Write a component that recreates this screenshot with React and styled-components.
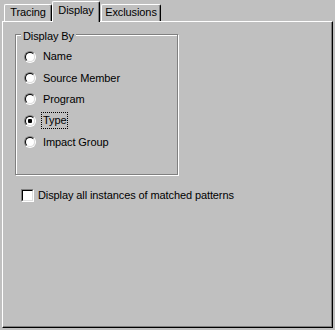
import React from "react";
import styled, { createGlobalStyle } from "styled-components";

const Global = createGlobalStyle`
  html, body { margin: 0; padding: 0; background: #c0c0c0; }
  body { font-family: "Liberation Sans", Arial, sans-serif; font-size: 11px; letter-spacing: -0.1px; color: #000; }
`;

const Window = styled.div`
  width: 335px;
  height: 330px;
  box-sizing: border-box;
  padding: 1px 0 0 2px;
  background: #c0c0c0;
`;

const TabRow = styled.div`
  display: flex;
  align-items: flex-end;
  height: 20px;
`;

const Tab = styled.div`
  position: relative;
  box-sizing: border-box;
  width: ${(p) => p.$w}px;
  height: ${(p) => (p.$active ? 21 : 17)}px;
  margin-left: ${(p) => p.$ml || 0}px;
  margin-bottom: ${(p) => (p.$active ? -1 : 0)}px;
  padding-top: ${(p) => (p.$active ? 2 : 1)}px;
  z-index: ${(p) => (p.$active ? 2 : 0)};
  background: #c0c0c0;
  border-top: 1px solid #fff;
  border-left: 1px solid #fff;
  border-right: 1px solid #000;
  border-top-left-radius: 2px;
  border-top-right-radius: 2px;
  box-shadow: inset -1px 0 0 #808080;
  text-align: center;
  line-height: 13px;
  white-space: nowrap;
`;

const Panel = styled.div`
  position: relative;
  z-index: 1;
  box-sizing: border-box;
  width: 331px;
  height: 307px;
  padding: 12px 0 0 12px;
  border-style: solid;
  border-width: 1px;
  border-color: #fff #000 #000 #fff;
  box-shadow: inset -1px -1px 0 #808080;
`;

const GroupBox = styled.div`
  position: relative;
  box-sizing: border-box;
  width: 163px;
  height: 141px;
  padding: 11px 0 0 8px;
  border: 1px solid #808080;
  box-shadow: inset 1px 1px 0 #fff, 1px 1px 0 #fff;
`;

const Legend = styled.span`
  position: absolute;
  top: -5px;
  left: 5px;
  padding: 0 2px;
  background: #c0c0c0;
  line-height: 13px;
  white-space: nowrap;
`;

const RadioList = styled.div`
  display: grid;
  grid-template-rows: repeat(5, 21.375px);
`;

const RadioRow = styled.div`
  display: flex;
  align-items: center;
  gap: 5px;
`;

const RadioOuter = styled.span`
  box-sizing: border-box;
  width: 12px;
  height: 12px;
  flex: none;
  border-radius: 50%;
  border: 1px solid;
  border-color: #808080 #fff #fff #808080;
  display: flex;
`;

const RadioInner = styled.span`
  box-sizing: border-box;
  width: 10px;
  height: 10px;
  border-radius: 50%;
  border: 1px solid;
  border-color: #000 #dfdfdf #dfdfdf #000;
  background: #fff;
  display: flex;
  align-items: center;
  justify-content: center;
`;

const Dot = styled.span`
  width: 4px;
  height: 4px;
  border-radius: 1px;
  background: #000;
`;

const Label = styled.span`
  border: 1px dotted ${(p) => (p.$focus ? "#000" : "transparent")};
  padding: 0 1px;
  line-height: 15px;
  white-space: nowrap;
`;

const CheckRow = styled.div`
  display: flex;
  align-items: center;
  gap: 4px;
  margin: 14px 0 0 6px;
  height: 13px;
`;

const CheckBox = styled.span`
  box-sizing: border-box;
  width: 13px;
  height: 13px;
  flex: none;
  border: 1px solid;
  border-color: #808080 #fff #fff #808080;
  display: flex;
`;

const CheckInner = styled.span`
  box-sizing: border-box;
  width: 11px;
  height: 11px;
  border: 1px solid;
  border-color: #000 #dfdfdf #dfdfdf #000;
  background: #fff;
`;

const CheckText = styled.span`
  line-height: 13px;
  white-space: nowrap;
`;

const options = [
  { label: "Name" },
  { label: "Source Member" },
  { label: "Program" },
  { label: "Type", checked: true },
  { label: "Impact Group" },
];

export default function App() {
  return (
    <>
      <Global />
      <Window>
        <TabRow>
          <Tab $w={48} $ml={2}>Tracing</Tab>
          <Tab $w={48} $active>Display</Tab>
          <Tab $w={60} $ml={1}>Exclusions</Tab>
        </TabRow>
        <Panel>
          <GroupBox>
            <Legend>Display By</Legend>
            <RadioList>
              {options.map((o) => (
                <RadioRow key={o.label}>
                  <RadioOuter>
                    <RadioInner>{o.checked && <Dot />}</RadioInner>
                  </RadioOuter>
                  <Label $focus={o.checked}>{o.label}</Label>
                </RadioRow>
              ))}
            </RadioList>
          </GroupBox>
          <CheckRow>
            <CheckBox>
              <CheckInner />
            </CheckBox>
            <CheckText>Display all instances of matched patterns</CheckText>
          </CheckRow>
        </Panel>
      </Window>
    </>
  );
}
